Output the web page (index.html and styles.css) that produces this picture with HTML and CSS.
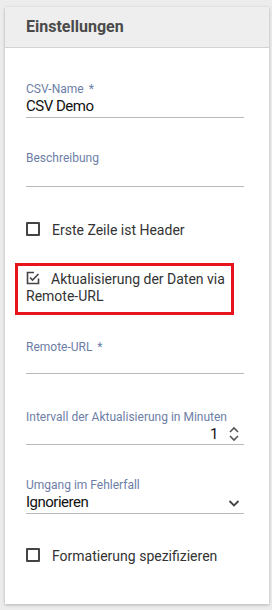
FILE: index.html
```html
<!DOCTYPE html>
<html>
<head>
    <title>Einstellungen</title>
    <link rel="stylesheet" href="styles.css">
</head>
<body>
<div class="card">
    <div class="card-head">Einstellungen</div>
    <div class="card-body">
        <div class="field">
            <label class="field-label">CSV-Name <span class="req">*</span></label>
            <div class="field-input">CSV Demo</div>
        </div>
        <div class="field">
            <label class="field-label">Beschreibung</label>
            <div class="field-input"></div>
        </div>
        <div class="check first">
            <span class="box"></span>Erste Zeile ist Header
        </div>
        <div class="check highlight">
            <span class="box checked">
                <svg width="14" height="14" viewBox="0 0 14 14">
                    <path d="M8 1.5 H1.5 V12.5 H12.5 V7.5" fill="none" stroke="#444" stroke-width="1.6"/>
                    <path d="M4 6.5 L6.5 9 L12.5 3" fill="none" stroke="#444" stroke-width="1.6"/>
                </svg>
            </span>Aktualisierung der Daten via Remote-URL
        </div>
        <div class="field remote">
            <label class="field-label">Remote-URL <span class="req">*</span></label>
            <div class="field-input"></div>
        </div>
        <div class="field interval">
            <label class="field-label">Intervall der Aktualisierung in Minuten</label>
            <div class="field-input number">
                <span class="num">1</span>
                <svg class="spin" width="12" height="18" viewBox="0 0 12 18">
                    <path d="M2 7 L6 3 L10 7" fill="none" stroke="#555" stroke-width="1.6"/>
                    <path d="M2 11 L6 15 L10 11" fill="none" stroke="#555" stroke-width="1.6"/>
                </svg>
            </div>
        </div>
        <div class="field errors">
            <label class="field-label">Umgang im Fehlerfall</label>
            <div class="field-input select">
                <span>Ignorieren</span>
                <svg width="12" height="8" viewBox="0 0 12 8">
                    <path d="M1.5 2 L6 6.5 L10.5 2" fill="none" stroke="#444" stroke-width="1.8"/>
                </svg>
            </div>
        </div>
        <div class="check last">
            <span class="box"></span>Formatierung spezifizieren
        </div>
    </div>
</div>
</body>
</html>
```
FILE: styles.css
```css
body {
    margin: 0;
    background-color: #ececec;
    font-family: Roboto, "Liberation Sans", sans-serif;
}

.card {
    margin: 7px 3px 5px 5px;
    background-color: white;
    box-shadow: 0 1px 3px rgba(0, 0, 0, 0.25);
}

.card-head {
    height: 40px;
    line-height: 40px;
    padding-left: 21px;
    background-color: #eeeeee;
    border-bottom: 1px solid #d2d2d2;
    font-size: 16px;
    font-weight: bold;
    color: #4a4a4a;
}

.card-body {
    padding: 34px 25px 38px 21px;
}

.field {
    margin-bottom: 33px;
    border-bottom: 1px solid #b9b9b9;
}

.field-label {
    display: block;
    height: 14px;
    line-height: 14px;
    font-size: 12px;
    color: #6d7ea6;
}

.req {
    margin-left: 2px;
}

.field-input {
    height: 21px;
    line-height: 21px;
    font-size: 15px;
    letter-spacing: -0.5px;
    color: #111;
}

.field.remote {
    margin-bottom: 36px;
}

.field.remote .field-input {
    height: 19px;
}

.field.interval .field-input {
    height: 20px;
}

.field.errors {
    margin-bottom: 32px;
}

.number {
    display: flex;
    justify-content: flex-end;
    align-items: center;
}

.number .num {
    margin-right: 10px;
}

.number .spin {
    margin-right: 4px;
}

.select {
    display: flex;
    justify-content: space-between;
    align-items: center;
}

.select svg {
    margin-right: 4px;
}

.check {
    line-height: 20px;
    font-size: 14px;
    color: #333;
    margin-bottom: 23px;
}

.box {
    display: inline-block;
    width: 10px;
    height: 10px;
    border: 2px solid #444;
    border-radius: 1px;
    vertical-align: -1px;
    margin-right: 12px;
}

.box.checked {
    border: none;
    width: 14px;
    height: 14px;
    vertical-align: -1px;
    margin-right: 11px;
}

.box.checked svg {
    display: block;
}

.highlight {
    border: 3px solid #e8141b;
    padding: 5px 0 7px 8px;
    margin-left: -11px;
    margin-right: 10px;
    line-height: 17px;
    margin-bottom: 25px;
}

.check.last {
    margin-bottom: 0;
}
```
